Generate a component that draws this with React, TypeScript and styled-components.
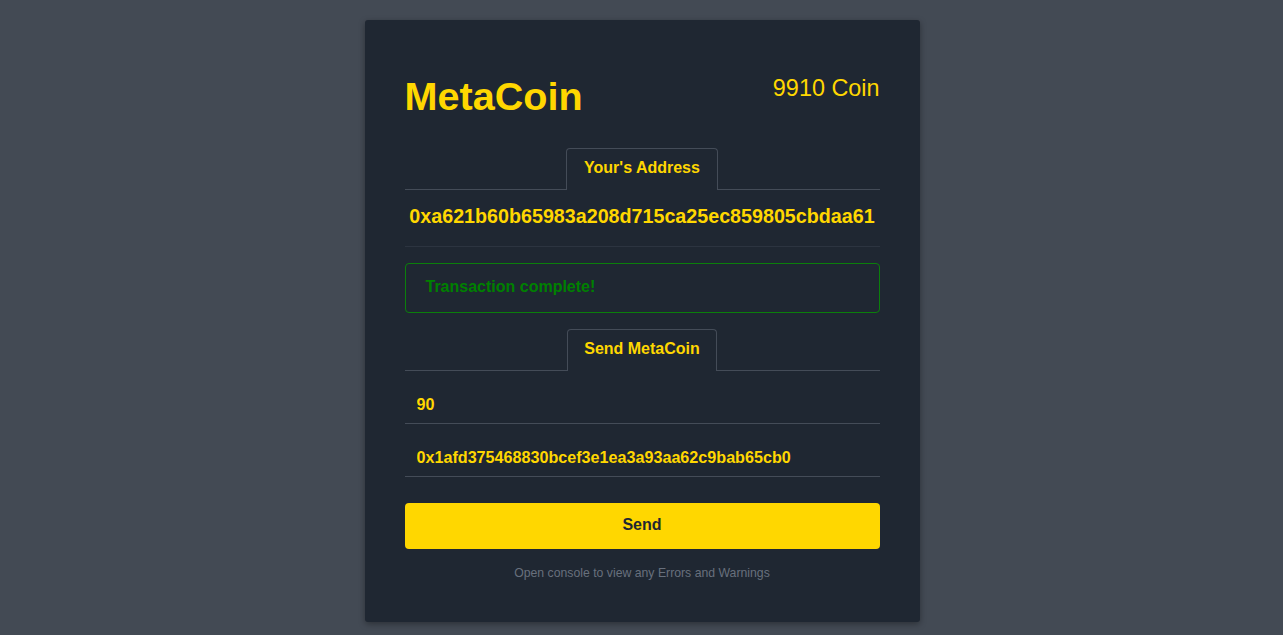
import React from "react";
import styled, { createGlobalStyle } from "styled-components";

const Global = createGlobalStyle`
  html, body { margin: 0; padding: 0; }
  body {
    background: #434a54;
    font-family: "Liberation Sans", Arial, sans-serif;
    min-height: 635px;
  }
  * { box-sizing: border-box; }
`;

const Page = styled.div`
  display: flex;
  justify-content: center;
  padding: 20px 0 0 1px;
`;

const Card = styled.div`
  width: 555px;
  height: 602px;
  background: #1f2732;
  border-radius: 3px;
  box-shadow: 0 2px 6px rgba(0, 0, 0, 0.35);
  padding: 53px 40px 40px;
  display: flex;
  flex-direction: column;
`;

const Header = styled.div`
  display: flex;
  justify-content: space-between;
  align-items: flex-start;
`;

const Title = styled.h1`
  margin: 0;
  font-size: 39.6px;
  line-height: 46px;
  font-weight: 700;
  color: #ffd700;
`;

const Balance = styled.div`
  font-size: 23.4px;
  line-height: 28px;
  color: #ffd700;
  margin-top: 1px;
`;

const TabBar = styled.div<{ $top: number }>`
  display: flex;
  justify-content: center;
  border-bottom: 1px solid #444c58;
  margin-top: ${(p) => p.$top}px;
`;

const Tab = styled.div<{ $width: number }>`
  width: ${(p) => p.$width}px;
  height: 42px;
  border: 1px solid #444c58;
  border-bottom: none;
  border-radius: 4px 4px 0 0;
  color: #ffd700;
  font-size: 16px;
  font-weight: 700;
  display: flex;
  align-items: center;
  justify-content: center;
  padding-bottom: 3px;
  margin-bottom: -1px;
  background: #1f2732;
  position: relative;
`;

const Address = styled.div`
  padding: 15px 0 18px;
  text-align: center;
  font-size: 19.7px;
  line-height: 23px;
  font-weight: 700;
  color: #ffd700;
  border-bottom: 1px solid #2c3440;
`;

const Alert = styled.div`
  margin-top: 16px;
  height: 50px;
  border: 1px solid #0b7f0b;
  border-radius: 4px;
  padding: 0 20px 2px;
  display: flex;
  align-items: center;
  color: #008000;
  font-size: 16px;
  font-weight: 700;
`;

const Field = styled.input`
  display: block;
  width: 100%;
  height: 53px;
  padding: 14px 12px 0;
  background: transparent;
  border: none;
  border-bottom: 1px solid #444c58;
  color: #ffd700;
  font-family: "Liberation Sans", Arial, sans-serif;
  font-size: 16.15px;
  font-weight: 700;
  outline: none;
`;

const SendButton = styled.button`
  margin-top: 26px;
  height: 46px;
  width: 100%;
  border: none;
  border-radius: 4px;
  background: #ffd700;
  color: #1f2732;
  font-family: "Liberation Sans", Arial, sans-serif;
  font-size: 16px;
  font-weight: 700;
  padding: 0 0 2px;
  cursor: pointer;
`;

const Footer = styled.p`
  margin: 17px 0 0;
  text-align: center;
  font-size: 12.25px;
  line-height: 14px;
  color: #68707d;
`;

export default function App() {
  return (
    <>
      <Global />
      <Page>
        <Card>
          <Header>
            <Title>MetaCoin</Title>
            <Balance>9910 Coin</Balance>
          </Header>
          <TabBar $top={29}>
            <Tab $width={152}>Your's Address</Tab>
          </TabBar>
          <Address>0xa621b60b65983a208d715ca25ec859805cbdaa61</Address>
          <Alert>Transaction complete!</Alert>
          <TabBar $top={16}>
            <Tab $width={150}>Send MetaCoin</Tab>
          </TabBar>
          <Field defaultValue="90" />
          <Field defaultValue="0x1afd375468830bcef3e1ea3a93aa62c9bab65cb0" />
          <SendButton>Send</SendButton>
          <Footer>Open console to view any Errors and Warnings</Footer>
        </Card>
      </Page>
    </>
  );
}
